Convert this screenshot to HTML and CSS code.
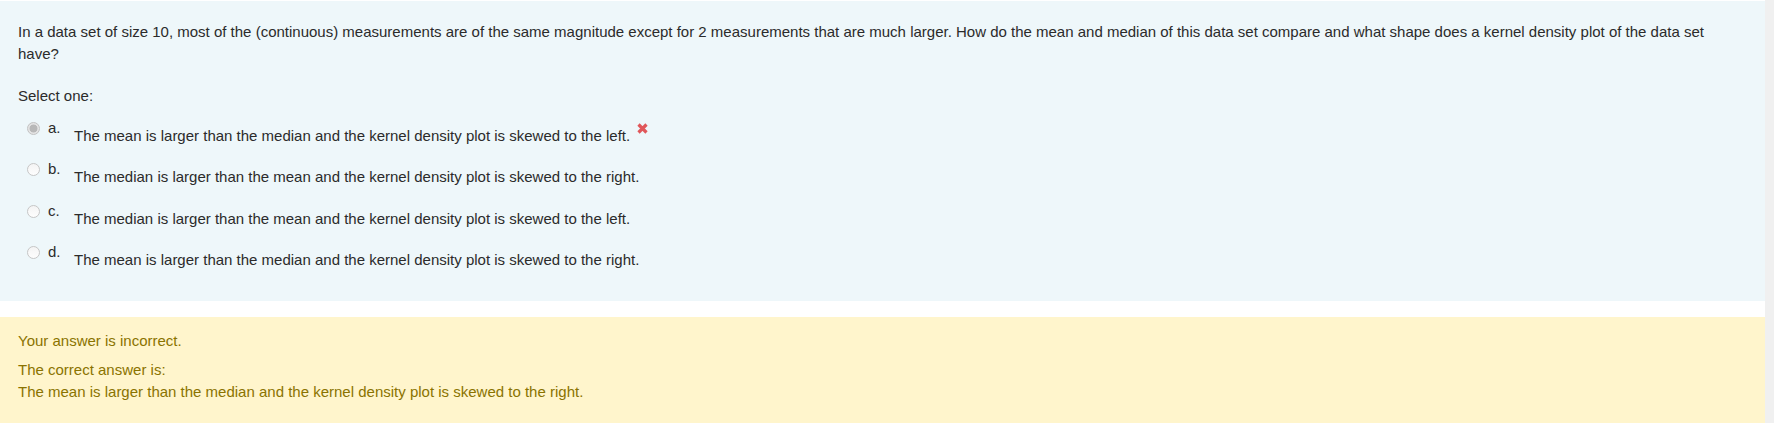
FILE: index.html
```html
<!DOCTYPE html>
<html lang="en">
<head>
<meta charset="utf-8">
<title>Question</title>
<link rel="stylesheet" href="styles.css">
</head>
<body>
<div class="page">
  <main class="que">
    <section class="formulation">
      <p class="qtext">In a data set of size 10, most of the (continuous) measurements are of the same magnitude except for 2 measurements that are much larger. How do the mean and median of this data set compare and what shape does a kernel density plot of the data set have?</p>
      <p class="prompt">Select one:</p>
      <div class="answers">
        <div class="option">
          <span class="radio checked"></span>
          <span class="num">a.</span>
          <span class="text">The mean is larger than the median and the kernel density plot is skewed to the left.</span>
          <svg class="wrong" width="11" height="11" viewBox="0 0 11 11" aria-label="Incorrect"><path d="M1.5 1.5 L9.5 9.5 M9.5 1.5 L1.5 9.5" stroke="#e0575a" stroke-width="3.2" stroke-linecap="butt"/></svg>
        </div>
        <div class="option">
          <span class="radio"></span>
          <span class="num">b.</span>
          <span class="text">The median is larger than the mean and the kernel density plot is skewed to the right.</span>
        </div>
        <div class="option">
          <span class="radio"></span>
          <span class="num">c.</span>
          <span class="text">The median is larger than the mean and the kernel density plot is skewed to the left.</span>
        </div>
        <div class="option">
          <span class="radio"></span>
          <span class="num">d.</span>
          <span class="text">The mean is larger than the median and the kernel density plot is skewed to the right.</span>
        </div>
      </div>
    </section>
    <section class="outcome">
      <p class="feedback">Your answer is incorrect.</p>
      <p class="rightanswer">The correct answer is:<br>The mean is larger than the median and the kernel density plot is skewed to the right.</p>
    </section>
  </main>
  <div class="rail"></div>
</div>
</body>
</html>
```
FILE: styles.css
```css
html, body {
  margin: 0;
  padding: 0;
  background: #ffffff;
}
body {
  font-family: "Liberation Sans", Arial, sans-serif;
  font-size: 15px;
  line-height: 22px;
  color: #2b2b2b;
}
.page {
  display: flex;
  min-height: 100vh;
}
.que {
  flex: 1;
  padding-top: 1px;
  display: flex;
  flex-direction: column;
}
.rail {
  width: 9px;
  background: #f0f0f0;
}
.formulation {
  background: #eef7fa;
  padding: 20px 40px 0 18px;
  height: 300px;
  box-sizing: border-box;
}
.qtext {
  margin: 0;
}
.prompt {
  margin: 20px 0 0;
}
.answers {
  margin-top: 10px;
  display: flex;
  flex-direction: column;
  gap: 11.33px;
}
.option {
  display: flex;
  align-items: flex-start;
}
.radio {
  width: 13px;
  height: 13px;
  box-sizing: border-box;
  border-radius: 50%;
  border: 1px solid #c6c6c6;
  background: linear-gradient(#f4f4f4, #fdfdfd);
  margin: 5px 0 0 9px;
  flex: none;
}
.radio.checked {
  border-color: #c2c2c2;
  background: radial-gradient(circle, #b8b8b8 0, #b8b8b8 3.6px, #e2e2e2 4.3px, #ebebeb 100%);
}
.num {
  width: 26px;
  margin-left: 8px;
  flex: none;
}
.text {
  margin-top: 8px;
}
.wrong {
  margin: 5.5px 0 0 7px;
  flex: none;
}
.outcome {
  margin-top: 16px;
  flex: 1;
  background: #fff5cc;
  color: #8a7300;
  padding: 12.5px 18px 0;
}
.outcome p {
  margin: 0;
}
.outcome .rightanswer {
  margin-top: 7.3px;
}
```
